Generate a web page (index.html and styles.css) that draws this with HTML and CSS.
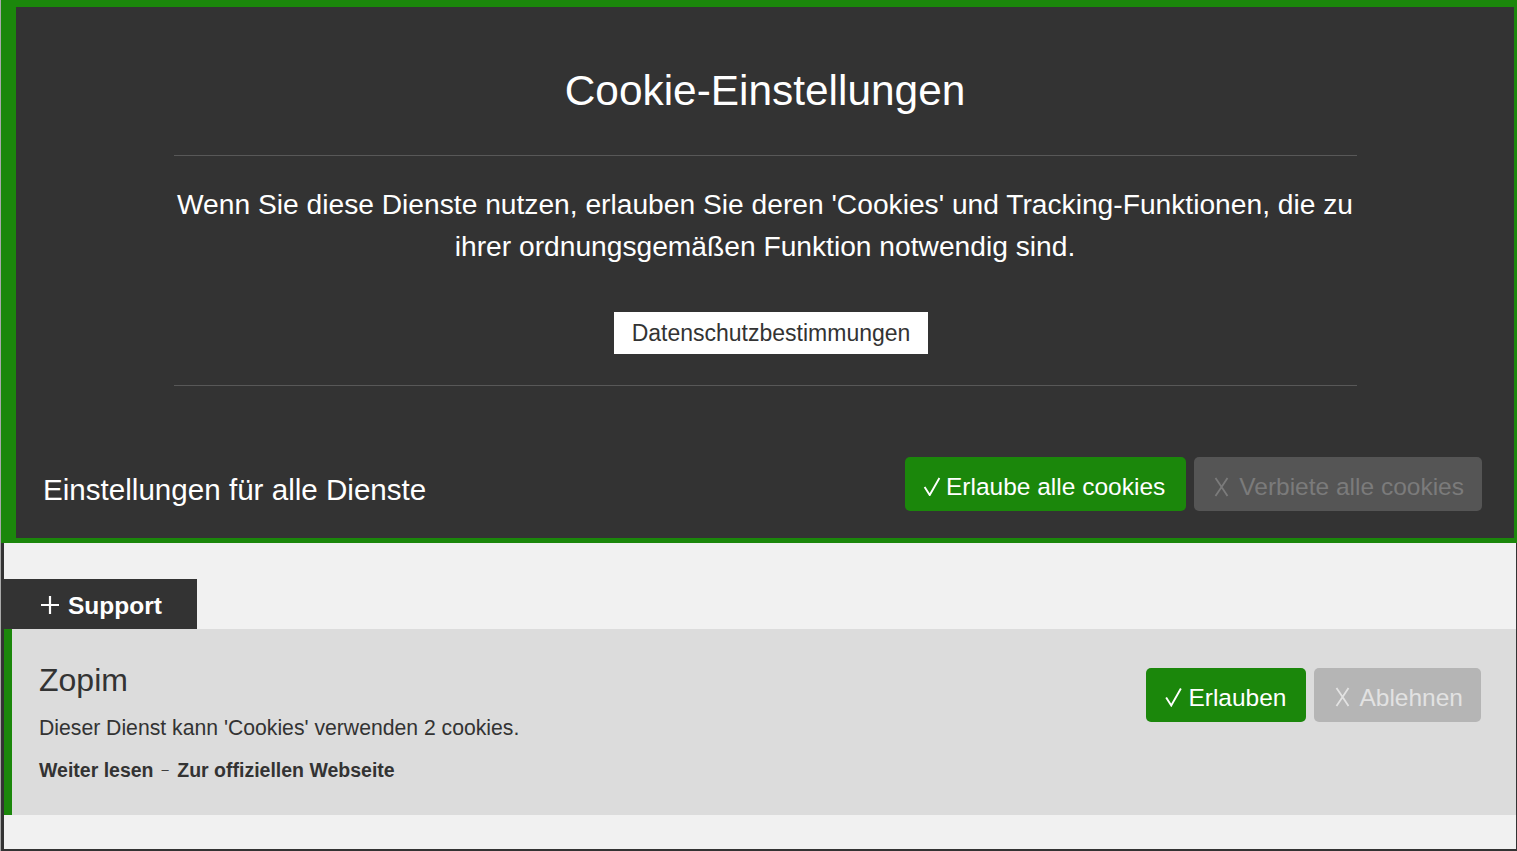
FILE: index.html
```html
<!DOCTYPE html>
<html lang="de">
<head>
<meta charset="utf-8">
<title>Cookie-Einstellungen</title>
<link rel="stylesheet" href="styles.css">
</head>
<body>
<div class="page">
  <header class="panel">
    <h1 class="panel-title">Cookie-Einstellungen</h1>
    <hr class="rule">
    <p class="intro">Wenn Sie diese Dienste nutzen, erlauben Sie deren 'Cookies' und Tracking-Funktionen, die zu ihrer ordnungsgemäßen Funktion notwendig sind.</p>
    <div class="privacy-wrap"><a class="privacy-btn" href="#">Datenschutzbestimmungen</a></div>
    <hr class="rule">
    <div class="all-row">
      <h2 class="all-title">Einstellungen für alle Dienste</h2>
      <div class="btn-group">
        <button class="btn btn-allow btn-hdr-allow"><svg class="ico-check" viewBox="0 0 18 20" width="18" height="19"><path d="M1.2 10.5 L6.6 19 L16.8 1" fill="none" stroke="currentColor" stroke-width="2"/></svg><span>Erlaube alle cookies</span></button>
        <button class="btn btn-deny-dark"><svg class="ico-x" viewBox="0 0 15 20" width="15" height="20"><path d="M1.5 1 Q7 9 13.5 19 M13.5 1 Q7 11 1.5 19" fill="none" stroke="currentColor" stroke-width="1.8"/></svg><span>Verbiete alle cookies</span></button>
      </div>
    </div>
  </header>
  <section class="services">
    <div class="tab"><svg class="ico-plus" viewBox="0 0 18 18" width="18" height="18"><path d="M9 0 V18 M0 9 H18" fill="none" stroke="currentColor" stroke-width="2.2"/></svg><span>Support</span></div>
    <div class="card">
      <div class="card-info">
        <h3 class="card-title">Zopim</h3>
        <p class="card-desc">Dieser Dienst kann 'Cookies' verwenden 2 cookies.</p>
        <p class="card-links"><a href="#">Weiter lesen</a><span class="sep">–</span><a href="#">Zur offiziellen Webseite</a></p>
      </div>
      <div class="btn-group card-btns">
        <button class="btn btn-allow btn-card-allow"><svg class="ico-check" viewBox="0 0 18 20" width="17" height="20"><path d="M1.2 10.5 L6.6 19 L16.8 1" fill="none" stroke="currentColor" stroke-width="2"/></svg><span>Erlauben</span></button>
        <button class="btn btn-deny-light"><svg class="ico-x" viewBox="0 0 15 20" width="15" height="20"><path d="M1.5 1 Q7 9 13.5 19 M13.5 1 Q7 11 1.5 19" fill="none" stroke="currentColor" stroke-width="1.8"/></svg><span>Ablehnen</span></button>
      </div>
    </div>
  </section>
</div>
</body>
</html>
```
FILE: styles.css
```css
* { box-sizing: border-box; }
html, body { margin: 0; padding: 0; }
body {
  background: #a9a9a9;
  font-family: "Liberation Sans", Arial, sans-serif;
  padding-left: 1px;
  height: 851px;
  overflow: hidden;
}
.page { width: 1516px; }

.panel {
  background: #333333;
  color: #ffffff;
  border-style: solid;
  border-color: #1b870b;
  border-width: 7px 3px 5px 15px;
  padding: 60.4px 0 27px 0;
}
.panel-title {
  margin: 0;
  text-align: center;
  font-weight: normal;
  font-size: 42.4px;
  line-height: 48px;
}
.rule {
  width: 1183px;
  margin: 39.6px auto 0;
  border: 0;
  height: 1px;
  background: #585858;
}
.intro {
  width: 1183px;
  margin: 27.3px auto 0;
  text-align: center;
  font-size: 28.2px;
  line-height: 42px;
}
.privacy-wrap {
  display: flex;
  justify-content: center;
  margin-top: 44.7px;
  height: 42px;
  padding-left: 12px;
}
.privacy-wrap + .rule { margin-top: 31px; }
.privacy-btn {
  display: block;
  background: #ffffff;
  color: #333333;
  text-decoration: none;
  font-size: 23px;
  line-height: 42px;
  height: 42px;
  padding: 0 17.5px;
}
.all-row {
  display: flex;
  justify-content: space-between;
  align-items: flex-end;
  margin-top: 71px;
  padding: 0 32px 0 27px;
}
.all-title {
  margin: 0 0 3.4px 0;
  font-weight: normal;
  font-size: 29.6px;
  line-height: 36px;
}
.btn-group { display: flex; gap: 8px; }
.btn {
  display: flex;
  align-items: flex-start;
  border: 0;
  border-radius: 5px;
  font-family: "Liberation Sans", Arial, sans-serif;
  font-size: 24.5px;
  line-height: 28px;
  height: 54px;
  padding: 16px 18px 10px 18px;
  cursor: pointer;
}
.btn svg { flex: none; margin-top: 4px; }
.btn-allow { background: #1b870b; color: #ffffff; }
.btn-hdr-allow { padding-left: 18px; padding-right: 21px; }
.btn-hdr-allow .ico-check { margin-right: 5px; margin-top: 4px; }
.btn-card-allow { padding-left: 19px; padding-right: 20px; }
.btn-card-allow .ico-check { margin-right: 6px; margin-top: 3px; }
.btn-deny-dark { background: #555555; color: #7b7b7b; padding-left: 20px; }
.btn-deny-light { background: #b5b5b5; color: #e2e2e2; padding-left: 21px; }
.ico-x { margin-right: 10px; }
.btn-deny-light .ico-x { margin-right: 9px; margin-top: 3px; }

.services {
  background: #f1f1f1;
  border-left: 3px solid #333333;
  border-right: 1px solid #333333;
  border-bottom: 2px solid #333333;
  padding: 36px 0 34px 0;
}
.tab {
  display: flex;
  width: fit-content;
  align-items: flex-start;
  background: #333333;
  color: #ffffff;
  font-weight: bold;
  font-size: 24.5px;
  line-height: 28px;
  height: 50px;
  padding: 13.5px 35px 8.5px 37px;
}
.ico-plus { margin: 4px 9px 0 0; }
.card {
  display: flex;
  justify-content: space-between;
  align-items: flex-start;
  background: #dcdcdc;
  border-left: 8px solid #1b870b;
  padding: 33px 35px 31px 27px;
  height: 186px;
  color: #333333;
}
.card-title {
  margin: 0;
  font-weight: normal;
  font-size: 32px;
  line-height: 36px;
}
.card-desc {
  margin: 15px 0 0 0;
  font-size: 21.2px;
  line-height: 30px;
}
.card-links {
  margin: 13px 0 0 0;
  font-size: 19.5px;
  line-height: 28px;
}
.card-links a {
  color: #333333;
  font-weight: bold;
  text-decoration: none;
}
.sep {
  font-size: 13px;
  line-height: 10px;
  margin: 0 8.5px 0 8px;
  position: relative;
  top: -3px;
}
.card-btns { margin-top: 6px; }
```
